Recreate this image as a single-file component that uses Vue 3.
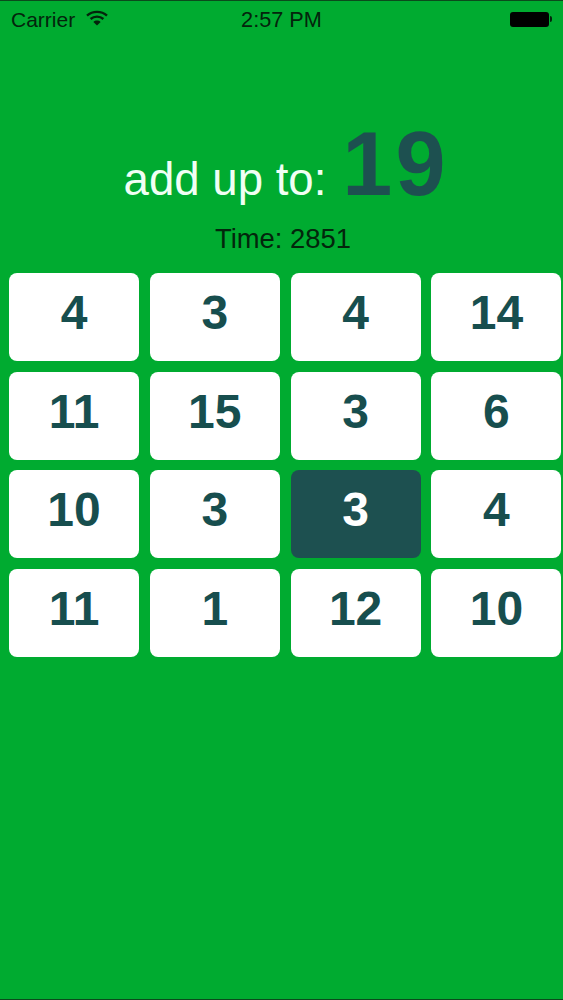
<script setup>
const tiles = [4, 3, 4, 14, 11, 15, 3, 6, 10, 3, 3, 4, 11, 1, 12, 10]
const activeIndex = 10
</script>

<template>
  <div class="screen">
    <div class="status">
      <div class="status-left">
        <span>Carrier</span>
        <svg class="wifi" width="22" height="16" viewBox="0 0 22 16">
          <path d="M1 5.6C6.6 .6 15.4 .6 21 5.6" fill="none" stroke="#04240c" stroke-width="2.4" />
          <path d="M4.6 9C8.2 5.8 13.8 5.8 17.4 9" fill="none" stroke="#04240c" stroke-width="2.4" />
          <path d="M7.4 11.9L11 15.6L14.6 11.9C12.6 10 9.4 10 7.4 11.9Z" fill="#04240c" />
        </svg>
      </div>
      <div class="clock">2:57 PM</div>
      <div class="battery"><div class="cell"></div><div class="nub"></div></div>
    </div>

    <div class="goal">
      <span class="goal-label">add up to:</span>
      <span class="goal-value">19</span>
    </div>
    <div class="timer">Time: 2851</div>

    <div class="grid">
      <div
        v-for="(n, i) in tiles"
        :key="i"
        class="tile"
        :class="{ active: i === activeIndex }"
      >{{ n }}</div>
    </div>
  </div>
</template>

<style>
html, body { margin: 0; background: #00ab30; }
</style>

<style scoped>
.screen {
  box-sizing: border-box;
  width: 563px;
  height: 1000px;
  overflow: hidden;
  background: #00ab30;
  border-top: 1px solid #0b4a1c;
  border-bottom: 1px solid #0b4a1c;
  font-family: "Liberation Sans", Arial, sans-serif;
}
.status {
  display: grid;
  grid-template-columns: 1fr auto 1fr;
  align-items: center;
  height: 38px;
  padding: 0 11px;
  color: #04240c;
}
.status-left {
  display: flex;
  align-items: center;
  gap: 11px;
  font-size: 21px;
}
.wifi { margin-top: -5px; }
.clock { font-size: 21.7px; }
.battery {
  display: flex;
  align-items: center;
  justify-self: end;
  margin-top: -2px;
}
.cell {
  width: 39px;
  height: 15px;
  background: #000;
  border-radius: 3px;
}
.nub {
  width: 2px;
  height: 6px;
  background: #04240c;
  border-radius: 0 2px 2px 0;
  margin-left: 1px;
}
.goal {
  display: flex;
  justify-content: center;
  align-items: baseline;
  gap: 16px;
  height: 110px;
  margin-top: 70px;
  padding-left: 6px;
  line-height: 110px;
}
.goal-label { color: #f0fff4; font-size: 45.6px; }
.goal-value {
  color: #1d5050;
  font-size: 90px;
  font-weight: 700;
  letter-spacing: 3px;
  margin-right: -3px;
}
.timer {
  margin-top: 5px;
  text-align: center;
  font-size: 27.4px;
  line-height: 30px;
  color: #03260c;
  padding-left: 3px;
}
.grid {
  display: grid;
  grid-template-columns: repeat(4, 130px);
  grid-auto-rows: 88px;
  column-gap: 10.8px;
  row-gap: 10.5px;
  margin-top: 19px;
  padding-left: 9px;
}
.tile {
  display: flex;
  align-items: center;
  justify-content: center;
  background: #fff;
  border-radius: 8px;
  color: #174e4e;
  font-size: 48px;
  font-weight: 700;
  padding-bottom: 9px;
  box-sizing: border-box;
}
.tile.active { background: #1d5050; color: #fff; }
</style>
